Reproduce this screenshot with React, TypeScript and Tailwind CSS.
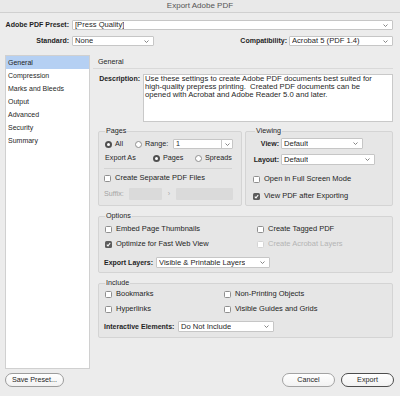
import type { ReactNode } from "react";

function Chevron() {
  return (
    <svg width="5" height="3" viewBox="0 0 5 3" className="shrink-0">
      <path d="M0.5 0.5 L2.5 2.5 L4.5 0.5" fill="none" stroke="#777" strokeWidth="0.9" />
    </svg>
  );
}

function Select({ value, className }: { value: string; className: string }) {
  return (
    <div
      className={`flex items-center justify-between bg-white border border-[#c6c6c6] rounded-[1px] pl-[2px] pr-[4px] text-[7.6px] ${className}`}
    >
      <span className="truncate">{value}</span>
      <Chevron />
    </div>
  );
}

function Radio({ label, checked, className }: { label: string; checked?: boolean; className?: string }) {
  return (
    <div className={`flex items-center gap-[3px] ${className ?? ""}`}>
      <span
        className={`w-[7px] h-[7px] rounded-full flex items-center justify-center ${
          checked ? "bg-[#505050]" : "bg-white border border-[#8f8f8f]"
        }`}
      >
        {checked && <span className="w-[3px] h-[3px] rounded-full bg-white" />}
      </span>
      <span>{label}</span>
    </div>
  );
}

function Check({ label, checked, disabled }: { label: string; checked?: boolean; disabled?: boolean }) {
  return (
    <div className="flex items-center gap-[4px] h-[8px] text-[7.5px]">
      <span
        className={`w-[7px] h-[7px] rounded-[1.5px] flex items-center justify-center ${
          checked
            ? "bg-[#5c5c5c]"
            : disabled
            ? "bg-white border border-[#d4d4d4]"
            : "bg-white border border-[#8f8f8f]"
        }`}
      >
        {checked && (
          <svg width="5" height="5" viewBox="0 0 5 5">
            <path d="M0.8 2.6 L2 3.8 L4.2 1" fill="none" stroke="white" strokeWidth="1.1" />
          </svg>
        )}
      </span>
      <span className={disabled ? "text-[#b4b4b4]" : ""}>{label}</span>
    </div>
  );
}

function Group({ title, titleClass, className, children }: { title: string; titleClass: string; className: string; children: ReactNode }) {
  return (
    <fieldset className={`border border-[#d4d4d4] rounded-[2px] bg-[#e6e6e6] ${className}`}>
      <legend className={`px-[1px] leading-[8px] ${titleClass}`}>{title}</legend>
      {children}
    </fieldset>
  );
}

const sections = ["General", "Compression", "Marks and Bleeds", "Output", "Advanced", "Security", "Summary"];

export default function App() {
  return (
    <div className="w-[400px] h-[396px] bg-[#ececec] text-[7.2px] leading-[8px] text-[#1f1f1f] font-['Liberation_Sans',Arial,sans-serif] overflow-hidden flex flex-col">
      {/* barra de titulo */}
      <div className="h-[13px] shrink-0 flex items-center justify-center text-[8px] text-[#555] bg-[#e9e9e9] border-b border-[#d0d0d0]">
        Export Adobe PDF
      </div>

      {/* preset */}
      <div className="mt-[7px] flex items-center h-[10px]">
        <div className="w-[72px] pr-[3px] text-right font-bold text-[7px]">Adobe PDF Preset:</div>
        <Select value="[Press Quality]" className="flex-1 mr-[7px] h-[10px]" />
      </div>
      <div className="mt-[6px] flex items-center h-[10px]">
        <div className="w-[72px] pr-[3px] text-right font-bold text-[7px]">Standard:</div>
        <Select value="None" className="w-[82px] h-[10px]" />
        <div className="ml-auto pr-[2px] font-bold text-[7px]">Compatibility:</div>
        <Select value="Acrobat 5 (PDF 1.4)" className="w-[104px] mr-[7px] h-[10px]" />
      </div>

      {/* cuerpo */}
      <div className="mt-[9px] flex h-[314px] shrink-0">
        <div className="ml-[5px] w-[85px] h-full bg-white border border-[#d0d0d0] text-[7px]">
          {sections.map((s, i) => (
            <div key={s} className={`h-[13px] flex items-center pl-[2px] ${i === 0 ? "bg-[#b5d0f3]" : ""}`}>
              {s}
            </div>
          ))}
        </div>

        <div className="ml-[3px] w-[300px] flex flex-col">
          <div className="h-[14px] flex items-center pl-[5px] border-b border-[#d9d9d9]">General</div>

          {/* descripcion */}
          <div className="mt-[5px] flex">
            <div className="w-[50px] pr-[3px] pt-[1px] text-right font-bold text-[7px]">Description:</div>
            <div className="flex-1 h-[48px] bg-white border border-[#c9c9c9] pl-[1px] whitespace-pre text-[7.7px] leading-[8px]">
              {"Use these settings to create Adobe PDF documents best suited for\nhigh-quality prepress printing.  Created PDF documents can be\nopened with Acrobat and Adobe Reader 5.0 and later."}
            </div>
          </div>

          {/* pages / viewing */}
          <div className="mt-[5px] flex gap-[3px] pl-[5px]">
            <Group title="Pages" titleClass="ml-[6px]" className="w-[144px] pb-[5px]">
              <div className="mt-[4px] flex items-center h-[10px] pl-[6px]">
                <Radio label="All" checked className="w-[30px]" />
                <Radio label="Range:" className="w-[38px]" />
                <div className="flex h-[10px] w-[60px] bg-white border border-[#c6c6c6] rounded-[1px]">
                  <span className="flex-1 pl-[2px] leading-[8px]">1</span>
                  <span className="w-[11px] border-l border-[#c6c6c6] flex items-center justify-center">
                    <Chevron />
                  </span>
                </div>
              </div>
              <div className="mt-[4px] flex items-center h-[10px] pl-[6px]">
                <div className="w-[48px]">Export As</div>
                <Radio label="Pages" checked className="w-[42px]" />
                <Radio label="Spreads" />
              </div>
              <div className="mt-[5px] ml-[5px] mr-[9px] h-px bg-[#d3d3d3]" />
              <div className="mt-[5px] pl-[5px]">
                <Check label="Create Separate PDF Files" />
              </div>
              <div className="mt-[6px] flex items-center h-[12px] pl-[5px]">
                <div className="w-[25px] text-[#a3a3a3]">Suffix:</div>
                <div className="w-[33px] h-[12px] bg-[#dadada] rounded-[1px]" />
                <div className="w-[14px] text-center text-[#aaa]">›</div>
                <div className="w-[57px] h-[12px] bg-[#dadada] rounded-[1px]" />
              </div>
            </Group>

            <Group title="Viewing" titleClass="ml-[9px]" className="flex-1">
              <div className="mt-[3px] flex items-center h-[11px]">
                <div className="w-[35px] pr-[2px] text-right font-bold text-[7px]">View:</div>
                <Select value="Default" className="w-[82px] h-[11px]" />
              </div>
              <div className="mt-[5px] flex items-center h-[11px]">
                <div className="w-[35px] pr-[2px] text-right font-bold text-[7px]">Layout:</div>
                <Select value="Default" className="w-[94px] h-[11px]" />
              </div>
              <div className="mt-[10px] pl-[7px]">
                <Check label="Open in Full Screen Mode" />
              </div>
              <div className="mt-[9px] pl-[7px]">
                <Check label="View PDF after Exporting" checked />
              </div>
            </Group>
          </div>

          {/* opciones */}
          <Group title="Options" titleClass="ml-[6px]" className="mt-[6px] ml-[5px] pb-[4px]">
            <div className="mt-[5px] flex pl-[6px]">
              <div className="w-[152px]">
                <Check label="Embed Page Thumbnails" />
              </div>
              <Check label="Create Tagged PDF" />
            </div>
            <div className="mt-[7px] flex pl-[6px]">
              <div className="w-[152px]">
                <Check label="Optimize for Fast Web View" checked />
              </div>
              <Check label="Create Acrobat Layers" disabled />
            </div>
            <div className="mt-[9px] flex items-center h-[11px] pl-[5px]">
              <div className="w-[52px] font-bold text-[7px]">Export Layers:</div>
              <Select value="Visible & Printable Layers" className="w-[114px] h-[11px]" />
            </div>
          </Group>

          {/* incluir */}
          <Group title="Include" titleClass="ml-[6px]" className="mt-[6px] ml-[5px] pb-[5px]">
            <div className="mt-[3px] flex pl-[6px]">
              <div className="w-[119px]">
                <Check label="Bookmarks" />
              </div>
              <Check label="Non-Printing Objects" />
            </div>
            <div className="mt-[7px] flex pl-[6px]">
              <div className="w-[119px]">
                <Check label="Hyperlinks" />
              </div>
              <Check label="Visible Guides and Grids" />
            </div>
            <div className="mt-[8px] flex items-center h-[11px] pl-[5px]">
              <div className="w-[74px] font-bold text-[7px]">Interactive Elements:</div>
              <Select value="Do Not Include" className="w-[96px] h-[11px]" />
            </div>
          </Group>
        </div>
      </div>

      {/* botones */}
      <div className="mt-[3px] flex items-center h-[15px]">
        <button className="ml-[5px] w-[59px] h-[14px] rounded-full border border-[#9c9c9c] bg-gradient-to-b from-white to-[#f2f2f2]">
          Save Preset...
        </button>
        <button className="ml-auto w-[53px] h-[14px] rounded-full border border-[#a3a3a3] bg-gradient-to-b from-white to-[#f2f2f2]">
          Cancel
        </button>
        <button className="ml-[6px] mr-[6px] w-[53px] h-[14px] rounded-full border border-[#4d4d4d] bg-gradient-to-b from-white to-[#f2f2f2]">
          Export
        </button>
      </div>
    </div>
  );
}
